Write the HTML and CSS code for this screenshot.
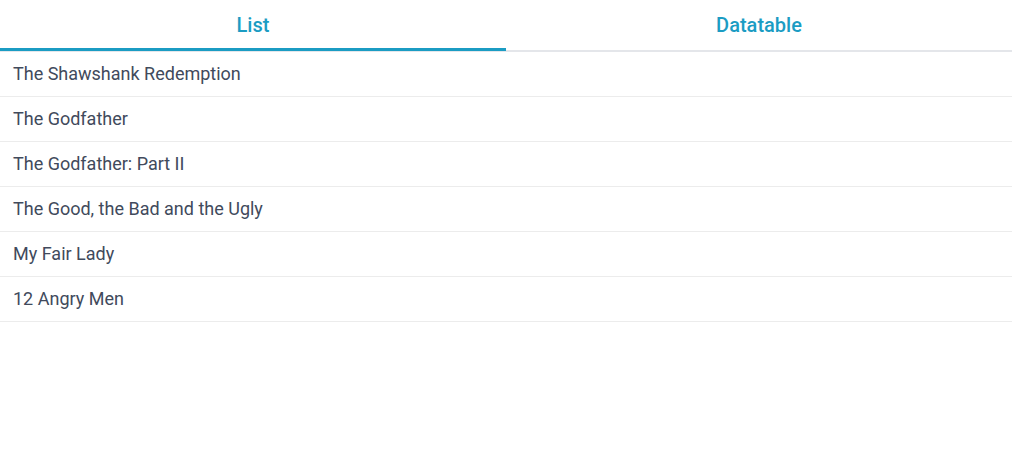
FILE: index.html
```html
<!DOCTYPE html>
<html>
<head>
<meta charset="utf-8">
<link rel="stylesheet" href="styles.css">
</head>
<body>
<div class="tabs">
  <div class="tab-bar">
    <div class="tab active">List</div>
    <div class="tab">Datatable</div>
  </div>
  <ul class="list">
    <li class="item">The Shawshank Redemption</li>
    <li class="item">The Godfather</li>
    <li class="item">The Godfather: Part II</li>
    <li class="item">The Good, the Bad and the Ugly</li>
    <li class="item">My Fair Lady</li>
    <li class="item">12 Angry Men</li>
  </ul>
</div>
</body>
</html>
```
FILE: styles.css
```css
html, body {
  margin: 0;
  padding: 0;
  background: #ffffff;
}
body {
  font-family: Roboto, "Liberation Sans", sans-serif;
}
.tabs {
  width: 1012px;
}
.tab-bar {
  display: flex;
  border-bottom: 2px solid #e4e6ea;
}
.tab {
  flex: 1;
  height: 46px;
  padding-top: 2px;
  display: flex;
  align-items: center;
  justify-content: center;
  font-size: 20px;
  font-weight: 500;
  color: #1b9cc3;
  border-bottom: 3px solid transparent;
  margin-bottom: -1px;
  box-sizing: content-box;
}
.tab.active {
  border-bottom-color: #1b9cc3;
}
.list {
  list-style: none;
  margin: 0;
  padding: 0;
}
.item {
  height: 43px;
  padding-bottom: 1px;
  display: flex;
  align-items: center;
  padding-left: 13px;
  font-size: 18px;
  color: #414a5c;
  border-bottom: 1px solid #ececec;
}
```
